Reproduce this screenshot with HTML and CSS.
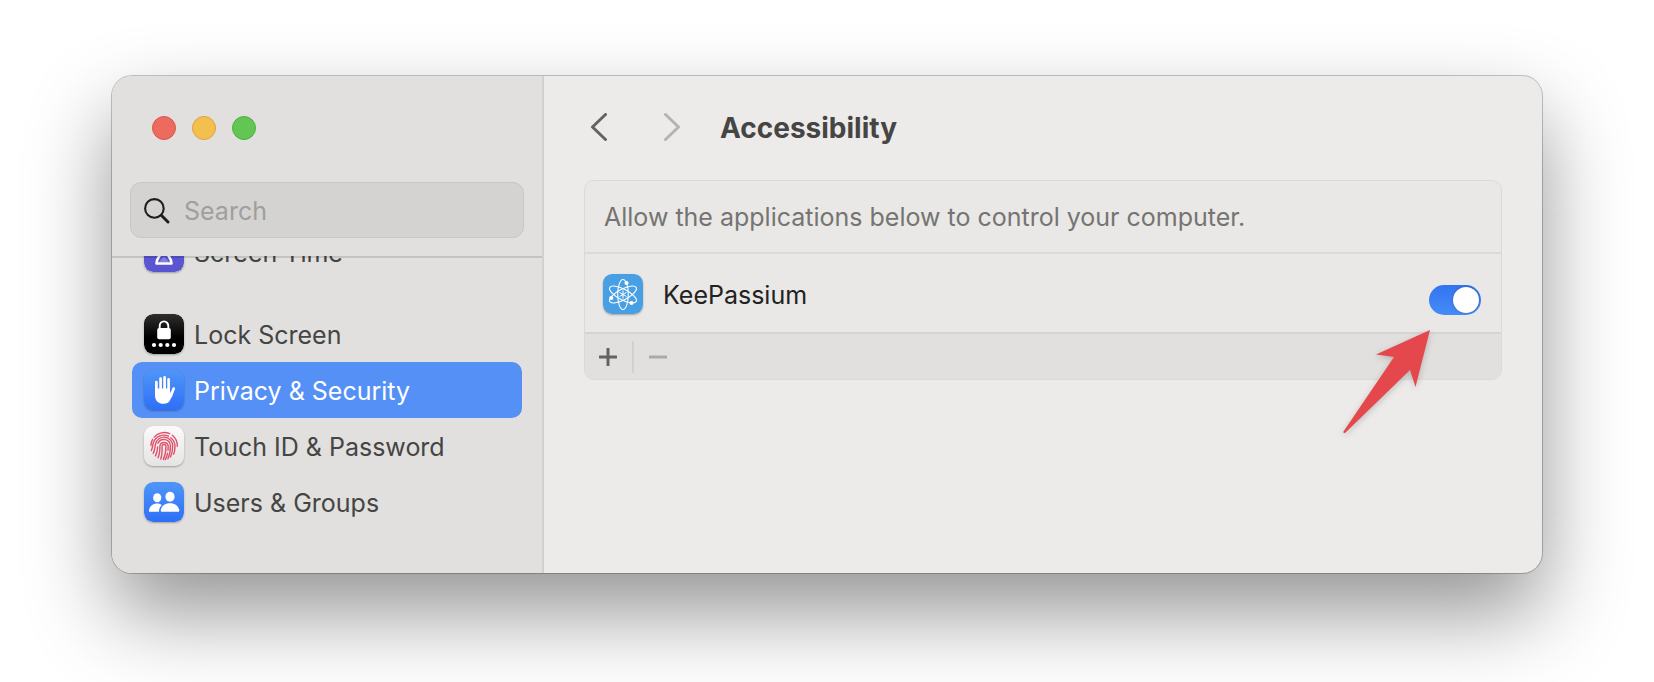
FILE: index.html
```html
<!DOCTYPE html>
<html lang="en">
<head>
    <meta charset="UTF-8">
    <meta name="viewport" content="width=device-width, initial-scale=1.0">
    <title>Accessibility</title>
    <link rel="stylesheet" href="styles.css">
</head>
<body>

    <div class="window">
        <aside class="sidebar">
            <div class="sidebar-header">
                <div class="traffic-lights">
                    <button class="light red" aria-label="Close"></button>
                    <button class="light yellow" aria-label="Minimize"></button>
                    <button class="light green" aria-label="Zoom"></button>
                </div>
                <label class="search">
                    <svg width="26" height="26" viewBox="0 0 26 26" fill="none" stroke="#1d1d1c" stroke-linecap="round">
                        <circle cx="10.4" cy="10.4" r="9.3" stroke-width="2.1"/>
                        <path d="M17.3 17.3L24 24" stroke-width="2.9"/>
                    </svg>
                    <input type="search" placeholder="Search" aria-label="Search">
                </label>
            </div>

            <nav class="list">
                <a href="#" class="item scrolled">
                    <svg class="icon" viewBox="0 0 40 40">
                        <rect width="40" height="40" rx="9" fill="#5a55d0"/>
                        <path d="M13.5 7.5h13c0 7-4.500 8-4.500 11.500s5.500 6 5.500 12.500h-15c0-6.500 5.500-9 5.500-12.500s-4.500-4.500-4.500-11.500z" fill="none" stroke="#fff" stroke-width="2.600" stroke-linejoin="round"/>
                        <path d="M20 24.500l5 5.500h-10z" fill="#fff" opacity=".25"/>
                    </svg>
                    <span>Screen Time</span>
                </a>
                <a href="#" class="item">
                    <svg class="icon" viewBox="0 0 40 40">
                        <defs>
                            <linearGradient id="black" x1="0" y1="0" x2="0" y2="1">
                                <stop offset="0" stop-color="#2e2e2e"/>
                                <stop offset=".6" stop-color="#000"/>
                            </linearGradient>
                            <linearGradient id="blue" x1="0" y1="0" x2="0" y2="1">
                                <stop offset="0" stop-color="#4f96f8"/>
                                <stop offset="1" stop-color="#2e6ff6"/>
                            </linearGradient>
                            <linearGradient id="white" x1="0" y1="0" x2="0" y2="1">
                                <stop offset="0" stop-color="#fbfbfb"/>
                                <stop offset="1" stop-color="#e4e4e4"/>
                            </linearGradient>
                        </defs>
                        <rect width="40" height="40" rx="9" fill="url(#black)"/>
                        <path d="M15.700 15v-3a4.300 4.600 0 0 1 8.600 0v3" fill="none" stroke="#fff" stroke-width="1.900"/>
                        <rect x="13.200" y="14" width="13.600" height="11.300" rx="2" fill="#fff"/>
                        <g fill="#fff">
                            <circle cx="10" cy="31" r="2.100"/>
                            <circle cx="16.700" cy="31" r="2.100"/>
                            <circle cx="23.300" cy="31" r="2.100"/>
                            <circle cx="30" cy="31" r="2.100"/>
                        </g>
                    </svg>
                    <span>Lock Screen</span>
                </a>
                <a href="#" class="item selected" aria-current="page">
                    <svg class="icon" viewBox="0 0 40 40">
                        <rect width="40" height="40" rx="9" fill="url(#blue)"/>
                        <g stroke="#fff" stroke-linecap="round" fill="none">
                            <path d="M12.400 12.200V23M16.600 8.500V21M20.600 7.300V21M24.600 9.400V22" stroke-width="2.700"/>
                            <path d="M29.700 18.600L26.800 26" stroke-width="2.700"/>
                        </g>
                        <path d="M11.050 18.500h14.900v5.300l1.100-2.600 2.300 1.500-2.800 6.500c-1.300 3-3.400 4.600-7 4.600-5 0-8.500-3-8.500-8.300z" fill="#fff"/>
                    </svg>
                    <span>Privacy &amp; Security</span>
                </a>
                <a href="#" class="item">
                    <svg class="icon" viewBox="0 0 40 40">
                        <rect width="40" height="40" rx="9" fill="url(#white)"/>
                        <g fill="none" stroke="#e0506a" stroke-width="1.400" stroke-linecap="round">
                            <path d="M10.200 11.100A13.300 13.300 0 0 1 25.600 7.700M28.300 9.200A13.300 13.300 0 0 1 33.300 20.300M6.900 19.500C6.900 16.900 7.500 15 8.600 13.300"/>
                            <path d="M7.300 24.500C8.600 21.800 8.500 19.500 9.300 16.800A11 11 0 0 1 24.500 10.200M26.800 11.700A11 11 0 0 1 31 20.500C31 23.500 30.600 26 29.600 28.200"/>
                            <path d="M9.200 27.400C11.200 23.900 10.600 21.500 11.500 18A8.700 8.700 0 0 1 28.700 20C28.700 24.500 28 28 26.500 31"/>
                            <path d="M11.500 29.800C13.300 26.700 13.300 24.300 13.600 21M14 17.300A6.500 6.500 0 0 1 26.400 20C26.400 25 25.500 29.500 23.900 32.800"/>
                            <path d="M14 31.700C15.600 28.700 15.900 25 15.900 20A4.200 4.200 0 0 1 24.200 20C24.200 21.500 24.100 23 24 24.300M23.500 27.300C23 29.700 22.300 31.800 21.300 33.600"/>
                            <path d="M16.700 33C18.100 29.500 18.200 25 18.100 20A2 2 0 0 1 22 20C22 25.500 21 30 19.300 33.600"/>
                        </g>
                    </svg>
                    <span>Touch ID &amp; Password</span>
                </a>
                <a href="#" class="item">
                    <svg class="icon" viewBox="0 0 40 40">
                        <rect width="40" height="40" rx="9" fill="url(#blue)"/>
                        <g fill="#fff">
                            <ellipse cx="13.200" cy="15.800" rx="4.100" ry="4.500"/>
                            <ellipse cx="26" cy="14.800" rx="4.600" ry="5"/>
                            <path d="M5 29.800c-.3-5 3.500-8.300 8.200-8.300 2 0 3.600.6 4.700 1.500-1.900 1.700-2.900 4-2.900 6.800z"/>
                            <path d="M18 29.800c-1.200 0-1.500-.8-1.200-2 .8-3.800 4.500-6.500 9.200-6.500s8.400 2.700 9.200 6.500c.3 1.200-.1 2-1.200 2z"/>
                        </g>
                    </svg>
                    <span>Users &amp; Groups</span>
                </a>
            </nav>
        </aside>

        <main class="content">
            <header class="toolbar">
                <button class="nav-button" aria-label="Back">
                    <svg width="16" height="28" viewBox="0 0 16 28"><path d="M14.500 1.500L1.500 14l13 12.500"/></svg>
                </button>
                <button class="nav-button" aria-label="Forward" disabled>
                    <svg width="16" height="28" viewBox="0 0 16 28"><path d="M1.500 1.500L14.500 14l-13 12.500"/></svg>
                </button>
                <h1>Accessibility</h1>
            </header>

            <section class="panel">
                <p class="description">Allow the applications below to control your computer.</p>
                <div class="app">
                    <svg class="icon" viewBox="0 0 40 40">
                        <rect width="40" height="40" rx="8" fill="#489fe3"/>
                        <g fill="none" stroke="#fff" stroke-width="1.100">
                            <ellipse cx="20" cy="20.500" rx="5.300" ry="15"/>
                            <ellipse cx="20" cy="20.500" rx="5.300" ry="15" transform="rotate(62 20 20.500)"/>
                            <ellipse cx="20" cy="20.500" rx="5.300" ry="15" transform="rotate(118 20 20.500)"/>
                            <path d="M20 16.500v8M16.500 18.500l7 4M23.500 18.500l-7 4" stroke-width="1"/>
                        </g>
                        <g fill="#fff">
                            <circle cx="23.500" cy="9" r="2.100"/>
                            <circle cx="8.300" cy="24" r="2.100"/>
                            <circle cx="28.500" cy="29" r="2.100"/>
                        </g>
                    </svg>
                    <label for="keepassium">KeePassium</label>
                    <input type="checkbox" class="switch" id="keepassium" checked>
                </div>
                <div class="actions">
                    <button class="action" aria-label="Add">
                        <svg width="18" height="18" viewBox="0 0 18 18"><path d="M1 9h16M9 1v16"/></svg>
                    </button>
                    <button class="action" aria-label="Remove" disabled>
                        <svg width="18" height="18" viewBox="0 0 18 18"><path d="M1 9h16"/></svg>
                    </button>
                </div>
                <!-- arrow pointing at the switch -->
                <svg class="arrow" width="88" height="104" viewBox="0 0 88 104">
                    <path d="M87 0L33 24.500l18 2.500L.5 101.500q-.5 2 1.500 1.500L67 40l5.500 17z" fill="#e5484c"/>
                </svg>
            </section>
        </main>
    </div>

</body>
</html>
```
FILE: styles.css
```css
* {
    box-sizing: border-box;
}
body {
    font-family: Inter, "Liberation Sans", sans-serif;
    font-size: 25px;
    font-optical-sizing: none;
    line-height: 32px;
    min-height: 100vh;
    margin: 0;
    padding: 76px 112px;
    background-color: #fff;
    color: #454543;
}
button {
    padding: 0;
    border: none;
    background: none;
}
svg {
    display: block;
    flex-shrink: 0;
}
.window {
    display: flex;
    border-radius: 20px;
    overflow: hidden;
    background-color: #ecebe9;
    box-shadow: 0 0 0 1px rgba(0, 0, 0, 0.22), 0 40px 84px rgba(0, 0, 0, 0.42);
}
.sidebar {
    width: 432px;
    flex-shrink: 0;
    background-color: #e1e0de;
    border-right: 2px solid #d2d1cf;
}
.sidebar-header {
    padding: 40px 18px 18px;
}
.traffic-lights {
    display: flex;
    gap: 16px;
    padding-left: 22px;
    margin-bottom: 42px;
}
.light {
    width: 24px;
    height: 24px;
    border-radius: 50%;
}
.red {
    background-color: #ed6a5f;
    border: 1px solid #d8564d;
}
.yellow {
    background-color: #f5bf50;
    border: 1px solid #d9a33e;
}
.green {
    background-color: #62c655;
    border: 1px solid #51ab43;
}
.search {
    display: flex;
    align-items: center;
    gap: 14px;
    height: 56px;
    padding: 2px 13px 0;
    border: 1px solid #c7c6c4;
    border-radius: 11px;
    background-color: #d4d3d1;
}
.search input {
    flex: 1;
    min-width: 0;
    padding: 0;
    border: none;
    outline: none;
    background: none;
    font: inherit;
    font-optical-sizing: none;
}
.search input::placeholder {
    color: #a09f9d;
}
.list {
    position: relative;
    overflow: hidden;
    padding: 0 20px 43px;
}
.list::before {
    content: "";
    position: absolute;
    top: 0;
    left: 0;
    right: 0;
    height: 2px;
    background-color: rgba(0, 0, 0, 0.13);
}
.item {
    display: flex;
    align-items: center;
    gap: 10px;
    height: 56px;
    padding: 0 12px;
    border-radius: 10px;
    color: inherit;
    text-decoration: none;
}
.item span {
    padding-top: 2px;
}
.scrolled {
    margin-top: -32px;
    margin-bottom: 26px;
}
.selected {
    background-color: #5490f5;
    color: #fff;
}
.icon {
    width: 40px;
    height: 40px;
    border-radius: 9px;
    box-shadow: 0 1px 2px rgba(0, 0, 0, 0.3);
}
.content {
    flex: 1;
    min-width: 0;
    padding: 28px 40px 40px;
}
.toolbar {
    display: flex;
    align-items: center;
    height: 46px;
    margin-bottom: 30px;
    padding-left: 7px;
}
.nav-button {
    margin-right: 57px;
}
.nav-button:disabled {
    margin-right: 40px;
    opacity: 0.4;
}
.nav-button path {
    fill: none;
    stroke: #636361;
    stroke-width: 3;
    stroke-linecap: round;
    stroke-linejoin: round;
}
h1 {
    margin: 0;
    padding-top: 2px;
    font-size: 28px;
    font-weight: 700;
}
.panel {
    position: relative;
    border: 1px solid #dbdad8;
    border-radius: 10px;
    background-color: #e9e8e6;
}
.description {
    margin: 0;
    padding: 20px 19px 19px;
    color: #757472;
}
.app {
    display: flex;
    align-items: flex-start;
    padding: 20px 20px 17px 18px;
    border-top: 2px solid #dbdad8;
    border-bottom: 2px solid #d5d4d2;
    color: #222221;
}
.app label {
    flex: 1;
    padding: 5px 20px 4px;
}
.switch {
    appearance: none;
    align-self: flex-end;
    width: 52px;
    height: 30px;
    margin: 11px 0 0;
    padding: 2px;
    border-radius: 15px;
    background: linear-gradient(#3274f0, #468cf7);
}
.switch::before {
    content: "";
    display: block;
    width: 26px;
    height: 26px;
    border-radius: 50%;
    background-color: #fff;
    box-shadow: 0 0 2px rgba(0, 0, 0, 0.4);
}
.switch:checked::before {
    margin-left: auto;
}
.actions {
    display: flex;
    align-items: center;
    height: 45px;
    border-radius: 0 0 9px 9px;
    background-color: #e1e0de;
}
.action {
    display: flex;
    align-items: center;
    height: 32px;
    padding: 0 15px 0 14px;
}
.action:disabled {
    padding-left: 15px;
    border-left: 2px solid #d2d1cf;
}
.action path {
    fill: none;
    stroke: #636361;
    stroke-width: 3;
    stroke-linecap: round;
}
.action:disabled path {
    stroke: #aaa9a7;
}
.arrow {
    position: absolute;
    top: 149px;
    right: 70px;
    overflow: visible;
    filter: drop-shadow(0 2px 3px rgba(0, 0, 0, 0.2));
}
```
